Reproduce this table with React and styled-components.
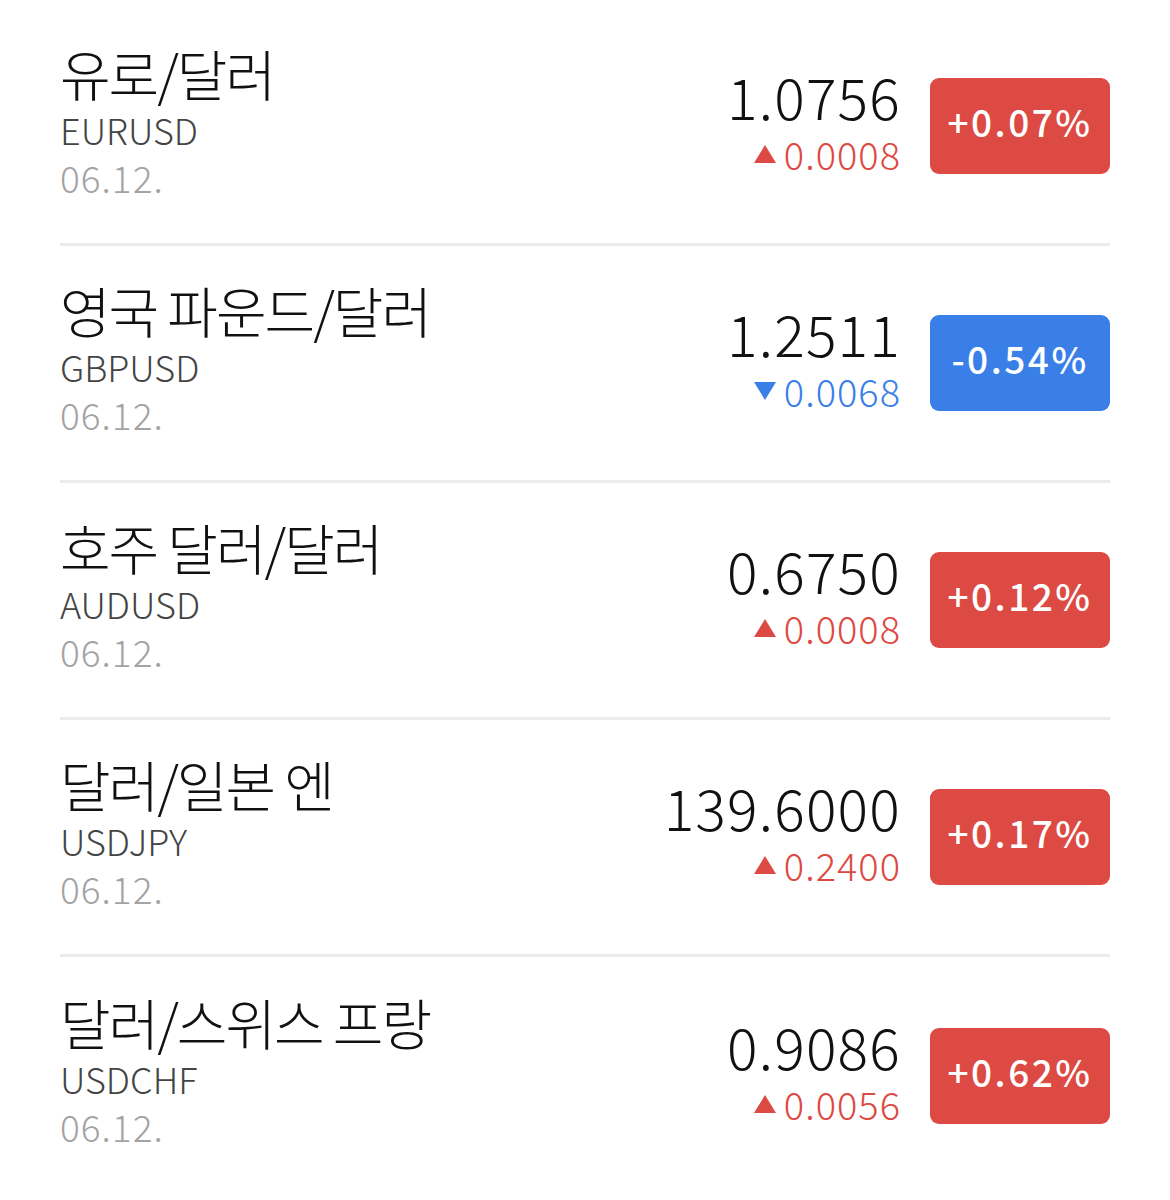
import React from "react";
import styled, { createGlobalStyle } from "styled-components";

const Global = createGlobalStyle`
  html, body { margin: 0; padding: 0; background: #fff; }
  body { font-family: "Noto Sans CJK KR", "Noto Sans", sans-serif; }
`;

const List = styled.div`
  display: flex;
  flex-direction: column;
  padding: 9px 60px 0;
`;

const Row = styled.div`
  display: flex;
  align-items: center;
  justify-content: space-between;
  height: 237px;
  box-sizing: border-box;
  border-bottom: ${(p) => (p.$last ? "none" : "3px solid #ebebeb")};
`;

const Left = styled.div`
  display: flex;
  flex-direction: column;
  margin-bottom: 11px;
`;

const Title = styled.div`
  font-size: 55px;
  font-weight: 300;
  line-height: 62px;
  margin-bottom: 2px;
  color: #111;
  letter-spacing: -2px;
`;

const Code = styled.div`
  font-size: 36px;
  font-weight: 300;
  line-height: 48px;
  color: #444;
`;

const DateText = styled.div`
  font-size: 37px;
  font-weight: 300;
  line-height: 48px;
  color: #a3a3a3;
  letter-spacing: 1px;
`;

const Right = styled.div`
  display: flex;
  align-items: center;
  gap: 30px;
`;

const Prices = styled.div`
  display: flex;
  flex-direction: column;
  align-items: flex-end;
  margin-bottom: 11px;
`;

const Price = styled.div`
  font-size: 57px;
  font-weight: 300;
  line-height: 58px;
  margin-top: 2px;
  margin-bottom: 7px;
  margin-right: -1px;
  letter-spacing: 1.2px;
  color: #111;
`;

const Change = styled.div`
  display: flex;
  align-items: center;
  gap: 8px;
  font-size: 38px;
  font-weight: 300;
  line-height: 46px;
  letter-spacing: 1px;
  margin-right: -1px;
  color: ${(p) => (p.$up ? "#dc4a43" : "#3a7fe8")};
`;

const Badge = styled.div`
  width: 180px;
  height: 96px;
  box-sizing: border-box;
  padding-bottom: 10px;
  border-radius: 9px;
  background: ${(p) => (p.$up ? "#dc4a43" : "#3a7fe8")};
  color: #fff;
  display: flex;
  align-items: center;
  justify-content: center;
  font-size: 37px;
  font-weight: 500;
  letter-spacing: 2.5px;
`;

const Tri = ({ up }) => (
  <svg width="22" height="18" viewBox="0 0 22 18">
    {up ? (
      <polygon points="11,0 22,18 0,18" fill="#dc4a43" />
    ) : (
      <polygon points="0,0 22,0 11,18" fill="#3a7fe8" />
    )}
  </svg>
);

const data = [
  { t: "유로/달러", c: "EURUSD", p: "1.0756", ch: "0.0008", pct: "+0.07%", up: true },
  { t: "영국 파운드/달러", c: "GBPUSD", p: "1.2511", ch: "0.0068", pct: "-0.54%", up: false },
  { t: "호주 달러/달러", c: "AUDUSD", p: "0.6750", ch: "0.0008", pct: "+0.12%", up: true },
  { t: "달러/일본 엔", c: "USDJPY", p: "139.6000", ch: "0.2400", pct: "+0.17%", up: true },
  { t: "달러/스위스 프랑", c: "USDCHF", p: "0.9086", ch: "0.0056", pct: "+0.62%", up: true },
];

export default function App() {
  return (
    <>
      <Global />
      <List>
        {data.map((d, i) => (
          <Row key={d.c} $last={i === data.length - 1}>
            <Left>
              <Title>{d.t}</Title>
              <Code>{d.c}</Code>
              <DateText>06.12.</DateText>
            </Left>
            <Right>
              <Prices>
                <Price>{d.p}</Price>
                <Change $up={d.up}>
                  <Tri up={d.up} />
                  {d.ch}
                </Change>
              </Prices>
              <Badge $up={d.up}>{d.pct}</Badge>
            </Right>
          </Row>
        ))}
      </List>
    </>
  );
}
